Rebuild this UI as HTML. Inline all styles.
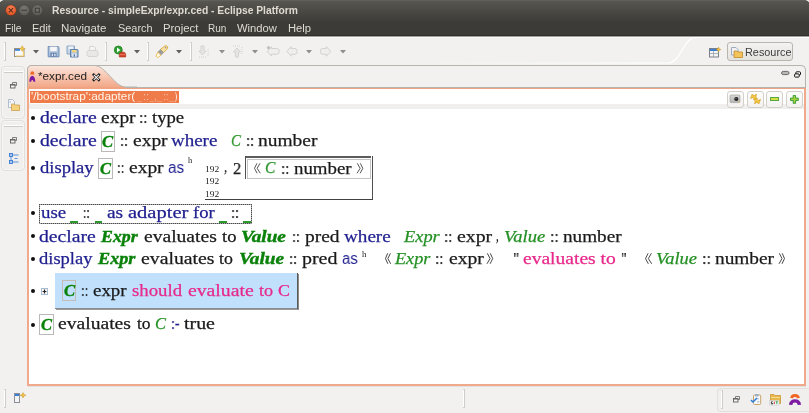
<!DOCTYPE html>
<html><head><meta charset="utf-8"><style>
html,body{margin:0;padding:0;}
body{width:809px;height:413px;overflow:hidden;position:relative;background:#f2f1f0;}
.t{position:absolute;white-space:pre;line-height:normal;transform-origin:0 0;will-change:transform;}
svg{position:absolute;overflow:visible;}
</style></head><body>
<div style="position:absolute;left:0px;top:0px;width:809px;height:22px;background:linear-gradient(#5b5a53,#57554f 8%,#4a4944 50%,#3d3c38);"></div>
<div style="position:absolute;left:0px;top:0px;width:809px;height:1px;background:#60605a;"></div>
<div style="position:absolute;left:0px;top:0px;width:2px;height:1px;background:#e8e8e6;"></div>
<div style="position:absolute;left:0px;top:1px;width:1px;height:1px;background:#d0d0cc;"></div>
<div style="position:absolute;left:2px;top:0px;width:1px;height:1px;background:#a0a09a;"></div>
<div style="position:absolute;left:807px;top:0px;width:2px;height:1px;background:#e8e8e6;"></div>
<div style="position:absolute;left:808px;top:1px;width:1px;height:1px;background:#d0d0cc;"></div>
<div style="position:absolute;left:806px;top:0px;width:1px;height:1px;background:#a0a09a;"></div>
<div style="position:absolute;left:0px;top:22px;width:809px;height:13px;background:#3c3b37;"></div>
<div style="position:absolute;left:0px;top:35px;width:809px;height:1px;background:#302f2b;"></div>
<div style="position:absolute;left:0px;top:36px;width:809px;height:1px;background:#a3a19d;"></div>
<div style="position:absolute;left:0px;top:37px;width:809px;height:1px;background:#f8f7f6;"></div>
<svg style="left:0;top:0" width="50" height="20">
<defs><radialGradient id="cg" cx="50%" cy="35%" r="60%"><stop offset="0" stop-color="#f8875c"/><stop offset="1" stop-color="#e0501f"/></radialGradient>
<radialGradient id="gg" cx="50%" cy="35%" r="60%"><stop offset="0" stop-color="#7a7872"/><stop offset="1" stop-color="#5d5b56"/></radialGradient></defs>
<circle cx="10.9" cy="10.2" r="5.4" fill="url(#cg)" stroke="#3a2a20" stroke-width="0.4"/>
<path d="M8.8 8.1 L13 12.3 M13 8.1 L8.8 12.3" stroke="#5a2a14" stroke-width="1.1"/>
<circle cx="24.2" cy="10.2" r="5.4" fill="url(#gg)" stroke="#3a3935" stroke-width="0.4"/>
<path d="M21.6 10.2 H26.8" stroke="#3c3b37" stroke-width="1.1"/>
<circle cx="37.3" cy="10.2" r="5.4" fill="url(#gg)" stroke="#3a3935" stroke-width="0.4"/>
<rect x="35.3" y="8.2" width="4" height="4" fill="none" stroke="#3c3b37" stroke-width="1"/>
</svg>
<div style="position:absolute;left:4px;top:42px;width:2px;height:1px;background:#d8d6d2;"></div>
<div style="position:absolute;left:4px;top:60px;width:2px;height:1px;background:#d0cecA;"></div>
<div style="position:absolute;left:4px;top:43px;width:1px;height:17px;background:#ffffff;"></div>
<div style="position:absolute;left:5px;top:42px;width:1px;height:19px;background:#cfcdc9;"></div>
<div style="position:absolute;left:105px;top:42px;width:2px;height:1px;background:#d8d6d2;"></div>
<div style="position:absolute;left:105px;top:60px;width:2px;height:1px;background:#d0cecA;"></div>
<div style="position:absolute;left:105px;top:43px;width:1px;height:17px;background:#ffffff;"></div>
<div style="position:absolute;left:106px;top:42px;width:1px;height:19px;background:#cfcdc9;"></div>
<div style="position:absolute;left:147px;top:42px;width:2px;height:1px;background:#d8d6d2;"></div>
<div style="position:absolute;left:147px;top:60px;width:2px;height:1px;background:#d0cecA;"></div>
<div style="position:absolute;left:147px;top:43px;width:1px;height:17px;background:#ffffff;"></div>
<div style="position:absolute;left:148px;top:42px;width:1px;height:19px;background:#cfcdc9;"></div>
<div style="position:absolute;left:190px;top:42px;width:2px;height:1px;background:#d8d6d2;"></div>
<div style="position:absolute;left:190px;top:60px;width:2px;height:1px;background:#d0cecA;"></div>
<div style="position:absolute;left:190px;top:43px;width:1px;height:17px;background:#ffffff;"></div>
<div style="position:absolute;left:191px;top:42px;width:1px;height:19px;background:#cfcdc9;"></div>
<svg style="left:13px;top:45px" width="13" height="12">
<rect x="1.5" y="3.5" width="9.5" height="8" fill="#f6f8fb" stroke="#9a8f80" stroke-width="1"/>
<rect x="2" y="4" width="5" height="1.8" fill="#3f86d6"/>
<path d="M3 11 H10.5 V6" stroke="#f2d070" stroke-width="1.2" fill="none"/>
<path d="M9.3 0.8 L10.3 2.8 L12.2 3.6 L10.3 4.4 L9.3 6.4 L8.3 4.4 L6.4 3.6 L8.3 2.8 Z" fill="#f3c64a" stroke="#c89a30" stroke-width="0.5"/>
</svg>
<svg style="left:32.5px;top:50px" width="7" height="5"><path d="M0 0 H6 L3 3.6 Z" fill="#606060"/></svg>
<svg style="left:47px;top:45px" width="13" height="13">
<path d="M1.2 1.5 H11.2 L12 2.3 V11.8 H1.2 Z" fill="#a9c0dc" stroke="#6f8fb6" stroke-width="1"/>
<rect x="3" y="1.8" width="7" height="4.4" fill="#f7f7fa" stroke="#c9cfd8" stroke-width="0.5"/>
<rect x="3.5" y="7.8" width="6" height="4" fill="#5678a6"/>
<rect x="4.7" y="8.6" width="1.4" height="2.6" fill="#dfe6f0"/>
<rect x="7.2" y="8.6" width="1.4" height="2.6" fill="#dfe6f0"/>
</svg>
<svg style="left:66px;top:45px" width="13" height="13">
<path d="M1 1 H8.5 V9 H1 Z" fill="#c5d4e6" stroke="#8ea6c2" stroke-width="1"/>
<rect x="2.5" y="1.5" width="4.5" height="2.6" fill="#eef1f6"/>
<path d="M4.5 4.5 H11.5 L12 5 V12 H4.5 Z" fill="#a9c0dc" stroke="#5f80aa" stroke-width="1"/>
<rect x="6" y="5" width="4.5" height="2.4" fill="#f2d47a"/>
<rect x="6" y="8.5" width="4.6" height="3.2" fill="#dfe6f4"/>
<rect x="7.6" y="9.4" width="1.4" height="2.3" fill="#5678a6"/>
</svg>
<svg style="left:86px;top:45px" width="13" height="13">
<path d="M3.5 1.5 H8 L9.5 3 V6 H3.5 Z" fill="#f4f4f4" stroke="#d6d5d2" stroke-width="1"/>
<rect x="1" y="5.5" width="11" height="6" rx="2" fill="#e9e8e6" stroke="#d6d5d2" stroke-width="1"/>
</svg>
<svg style="left:113px;top:45px" width="14" height="13">
<circle cx="5.3" cy="5" r="4" fill="#2f9f2f" stroke="#1e7a1e" stroke-width="0.7"/>
<path d="M4 2.6 L7.4 5 L4 7.4 Z" fill="#f4fff4"/>
<path d="M6.3 12 V9.5 Q6.3 7 9.5 7 Q12.7 7 12.7 9.5 V12 Z" fill="#d2452c" stroke="#a83018" stroke-width="0.6"/>
<path d="M7 9.6 H12" stroke="#f08a70" stroke-width="0.7"/>
</svg>
<svg style="left:134px;top:50px" width="7" height="5"><path d="M0 0 H6 L3 3.6 Z" fill="#606060"/></svg>
<svg style="left:155px;top:45px" width="14" height="13">
<path d="M9.8 0.9 Q11.8 0.3 12.6 1.6 Q13 3 11.8 4.3 L8.6 7.6 L5.4 4.4 Z" fill="#f6e2a0" stroke="#d6a030" stroke-width="0.8"/>
<path d="M5.4 4.4 L8.6 7.6 L5.9 10.3 L2.7 7.1 Z" fill="#9c9c9c" stroke="#8a8a8a" stroke-width="0.4"/>
<path d="M2.7 7.1 L5.9 10.3 L3.4 12.3 Q1.5 12.6 1 11.2 Z" fill="#fffbe8" stroke="#e8b440" stroke-width="0.8"/>
<circle cx="10.7" cy="2.6" r="0.8" fill="#9090a8"/>
</svg>
<svg style="left:176px;top:50px" width="7" height="5"><path d="M0 0 H6 L3 3.6 Z" fill="#606060"/></svg>
<svg style="left:198px;top:45px" width="12" height="13">
<path d="M3 1 H6 V6 H8 L4.5 10 L1 6 H3 Z" fill="#e8e6e2" stroke="#d4d2ce" stroke-width="1"/>
<path d="M1 12 H9 M10 4 V11" stroke="#d4d2ce" stroke-width="1" stroke-dasharray="1 1"/>
</svg>
<svg style="left:219px;top:50px" width="7" height="5"><path d="M0 0 H6 L3 3.6 Z" fill="#8e8e8e"/></svg>
<svg style="left:232px;top:45px" width="12" height="13">
<path d="M3.5 12 H6.5 V7 H8.5 L5 3 L1.5 7 H3.5 Z" fill="#e8e6e2" stroke="#d4d2ce" stroke-width="1"/>
<path d="M1 1 H9 M10 2 V9" stroke="#d4d2ce" stroke-width="1" stroke-dasharray="1 1"/>
</svg>
<svg style="left:252px;top:50px" width="7" height="5"><path d="M0 0 H6 L3 3.6 Z" fill="#8e8e8e"/></svg>
<svg style="left:266px;top:46px" width="14" height="11">
<path d="M5.5 2.5 H10.5 A2.8 2.8 0 0 1 10.5 8.2 H5.5 V10 L1.2 5.4 L5.5 0.8 Z" fill="#efeeec" stroke="#d2d0cc" stroke-width="1"/>
<path d="M2.5 0 V3.4 M0.8 1.7 H4.2 M1.3 0.5 L3.7 2.9 M3.7 0.5 L1.3 2.9" stroke="#b8b6b2" stroke-width="0.8"/>
</svg>
<svg style="left:286px;top:46px" width="12" height="11">
<path d="M5.2 2.5 H9 A2.2 2.9 0 0 1 9 8.3 H5.2 V10.2 L0.8 5.4 L5.2 0.6 Z" fill="#efeeec" stroke="#d4d2ce" stroke-width="1"/>
</svg>
<svg style="left:305.5px;top:50px" width="7" height="5"><path d="M0 0 H6 L3 3.6 Z" fill="#8e8e8e"/></svg>
<svg style="left:319.5px;top:46px" width="12" height="11">
<path d="M6.3 2.5 H2.5 A2.2 2.9 0 0 0 2.5 8.3 H6.3 V10.2 L10.7 5.4 L6.3 0.6 Z" fill="#efeeec" stroke="#d4d2ce" stroke-width="1"/>
</svg>
<svg style="left:339.5px;top:50px" width="7" height="5"><path d="M0 0 H6 L3 3.6 Z" fill="#8e8e8e"/></svg>
<svg style="left:0;top:36px" width="809" height="30">
<defs><linearGradient id="wf" gradientUnits="userSpaceOnUse" x1="420" y1="0" x2="640" y2="0"><stop offset="0" stop-color="#fff" stop-opacity="0"/><stop offset="1" stop-color="#fff" stop-opacity="1"/></linearGradient></defs>
<path d="M420 27 H668 C681 27 683 1.5 696 1.5 H809" fill="none" stroke="url(#wf)" stroke-width="1.2"/>
</svg>
<svg style="left:709px;top:47px" width="13" height="11">
<rect x="0.5" y="1.5" width="9" height="8.5" fill="#f4f4f4" stroke="#7a7f88" stroke-width="1"/>
<rect x="1" y="2" width="8" height="2" fill="#3b7fd0"/>
<path d="M1 6.5 H9.5 M4.5 4 V10" stroke="#9aa0a8" stroke-width="0.8"/>
<path d="M9.5 0 L10.3 1.8 L12 2.5 L10.3 3.2 L9.5 5 L8.7 3.2 L7 2.5 L8.7 1.8 Z" fill="#f0c040" stroke="#c08a20" stroke-width="0.4"/>
</svg>
<div style="position:absolute;left:727px;top:42px;width:66px;height:19px;box-sizing:border-box;border:1px solid #b9b6b0;border-radius:3px;background:linear-gradient(#f4f3f1,#e4e2de);"></div>
<svg style="left:731px;top:47px" width="12" height="11">
<path d="M0.5 0.5 H5 L7 2.5 V8 H0.5 Z" fill="#eef2f8" stroke="#8a9ab0" stroke-width="0.8"/>
<path d="M3 4 H6 L7 5 H11.5 V10.5 H3 Z" fill="#f2c45a" stroke="#c08a28" stroke-width="0.8"/>
</svg>
<div style="position:absolute;left:1px;top:66px;width:24px;height:53px;box-sizing:border-box;border:1px solid #e2e0dc;border-radius:4px;background:#f0efed;box-shadow:inset 0 0 0 1px #f7f6f5;"></div>
<div style="position:absolute;left:1px;top:120px;width:24px;height:51px;box-sizing:border-box;border:1px solid #e2e0dc;border-radius:4px;background:#f0efed;box-shadow:inset 0 0 0 1px #f7f6f5;"></div>
<div style="position:absolute;left:4px;top:71px;width:19px;height:1px;background:#ffffff;"></div>
<div style="position:absolute;left:4px;top:72px;width:19px;height:1px;background:#cfccc7;"></div>
<div style="position:absolute;left:4px;top:125px;width:19px;height:1px;background:#ffffff;"></div>
<div style="position:absolute;left:4px;top:126px;width:19px;height:1px;background:#cfccc7;"></div>
<svg style="left:10px;top:82px" width="7" height="7">
<path d="M2.5 2 V0.5 H6.5 V3.5 H5.2" fill="none" stroke="#707070" stroke-width="0.9"/>
<rect x="0.5" y="2.5" width="4.5" height="3.5" fill="#f4f4f4" stroke="#606060" stroke-width="0.9"/>
<path d="M0.5 3 H5" stroke="#606060" stroke-width="1"/>
</svg>
<svg style="left:10px;top:137px" width="7" height="7">
<path d="M2.5 2 V0.5 H6.5 V3.5 H5.2" fill="none" stroke="#707070" stroke-width="0.9"/>
<rect x="0.5" y="2.5" width="4.5" height="3.5" fill="#f4f4f4" stroke="#606060" stroke-width="0.9"/>
<path d="M0.5 3 H5" stroke="#606060" stroke-width="1"/>
</svg>
<svg style="left:8px;top:99px" width="12" height="12">
<path d="M0.5 0.5 H4.5 L6.5 2.5 V8.5 H0.5 Z" fill="#f4f6fa" stroke="#a0aec0" stroke-width="0.8"/>
<path d="M1.5 3 H3" stroke="#7aa0d0" stroke-width="0.8"/>
<path d="M3.5 5 H6 L7 6 H11.5 V11.5 H3.5 Z" fill="#f6d27a" stroke="#caa050" stroke-width="0.8"/>
</svg>
<svg style="left:9px;top:153px" width="10" height="12">
<rect x="0.5" y="0.5" width="3" height="3" fill="#a8c8f0" stroke="#3a7ad0" stroke-width="0.9"/>
<rect x="0.5" y="7.5" width="3" height="3" fill="#a8c8f0" stroke="#3a7ad0" stroke-width="0.9"/>
<path d="M4 2 H9.5 M4 9 H9.5 M5.5 5.5 H8.5 M2 3.5 V7.5" stroke="#4a88d8" stroke-width="0.9"/>
</svg>
<div style="position:absolute;left:27px;top:65px;width:779px;height:320px;box-sizing:border-box;border:1px solid #b7b3ad;border-bottom:none;border-radius:5px 5px 0 0;background:#f2f1f0;"></div>
<div style="position:absolute;left:27px;top:87px;width:779px;height:1px;background:#b7b3ad;"></div>
<svg style="left:27px;top:65px" width="110" height="24">
<defs><linearGradient id="tg" x1="0" y1="0" x2="0" y2="1"><stop offset="0" stop-color="#fce6dc"/><stop offset="1" stop-color="#f1a280"/></linearGradient></defs>
<path d="M0.5 24 V5 Q0.5 0.5 5 0.5 H68 C78 0.5 88 22 98 22 V24 Z" fill="url(#tg)"/>
<path d="M0.5 24 V5 Q0.5 0.5 5 0.5 H68 C78 0.5 88 22 98 22 H110" fill="none" stroke="#b7b3ad" stroke-width="1"/>
</svg>
<div style="position:absolute;left:27px;top:88px;width:779px;height:298px;box-sizing:border-box;border:2px solid #f0a98b;border-top:1px solid #f0a384;background:#fff;"></div>
<div style="position:absolute;left:28px;top:386px;width:778px;height:1px;background:#e2e0dd;"></div>
<div style="position:absolute;left:27px;top:87px;width:98px;height:2px;background:#f1a280;"></div>
<svg style="left:29px;top:70px" width="8" height="13">
<path d="M1.3 4.6 C1.3 0.2 5.3 0.2 5.3 4.6 Z" fill="#f26522"/>
<path d="M0.3 11.8 C0.3 3.6 6.3 3.6 6.3 11.8 L4.4 11.8 C4.2 9.3 2.4 9.3 2.2 11.8 Z" fill="#7d1ba3"/>
</svg>
<svg style="left:92px;top:72.5px" width="9" height="9">
<path d="M1.8 1.8 L6.8 6.8 M6.8 1.8 L1.8 6.8" stroke="#1a1a1a" stroke-width="2.6" stroke-linecap="square"/>
<path d="M1.8 1.8 L6.8 6.8 M6.8 1.8 L1.8 6.8" stroke="#fafafa" stroke-width="1.1"/>
</svg>
<svg style="left:781px;top:70px" width="9" height="6"><rect x="0.6" y="1.4" width="7.4" height="3.2" rx="1.6" fill="#b9b9b9" stroke="#6a6a6a" stroke-width="1"/></svg>
<svg style="left:793.5px;top:71px" width="8" height="7"><rect x="1.9" y="0.8" width="4.6" height="3.2" rx="0.8" fill="#fff" stroke="#111" stroke-width="1"/><rect x="0.6" y="2.9" width="4.6" height="3.2" rx="0.8" fill="#f4f4f4" stroke="#111" stroke-width="1"/></svg>
<div style="position:absolute;left:29px;top:104px;width:775px;height:5px;background:#f0efee;"></div>
<div style="position:absolute;left:30px;top:91px;width:149px;height:12px;background:#ef7b4b;"></div>
<div style="position:absolute;left:726.5px;top:90.5px;width:17px;height:17px;box-sizing:border-box;border:1px solid #d3d0cb;border-radius:3px;background:linear-gradient(#fdfdfc,#f3f2f0);"></div>
<div style="position:absolute;left:746.5px;top:90.5px;width:17px;height:17px;box-sizing:border-box;border:1px solid #d3d0cb;border-radius:3px;background:linear-gradient(#fdfdfc,#f3f2f0);"></div>
<div style="position:absolute;left:766px;top:90.5px;width:17px;height:17px;box-sizing:border-box;border:1px solid #d3d0cb;border-radius:3px;background:linear-gradient(#fdfdfc,#f3f2f0);"></div>
<div style="position:absolute;left:786px;top:90.5px;width:17px;height:17px;box-sizing:border-box;border:1px solid #d3d0cb;border-radius:3px;background:linear-gradient(#fdfdfc,#f3f2f0);"></div>
<svg style="left:729px;top:94px" width="13" height="10">
<defs><linearGradient id="cam" x1="0" y1="0" x2="0" y2="1"><stop offset="0" stop-color="#d8d8d8"/><stop offset="1" stop-color="#b4b4b4"/></linearGradient></defs>
<rect x="1" y="1" width="10" height="7.6" rx="1" fill="url(#cam)" stroke="#9a9a9a" stroke-width="0.6"/>
<circle cx="7.3" cy="5" r="2.1" fill="#222"/><circle cx="7" cy="4.6" r="0.7" fill="#888"/>
<rect x="9.2" y="7.4" width="1.6" height="1" fill="#e0c060"/>
</svg>
<svg style="left:749px;top:93px" width="13" height="13">
<path d="M1.5 5.5 L3 1.2 L5 2.6 L7.5 1.2 L6.8 4.2 L8.6 5.6 L5.4 6.2 L4 4.6 Z" fill="#f2c842" stroke="#d49a20" stroke-width="0.6"/>
<path d="M11.5 6.5 L10 10.8 L8 9.4 L5.5 10.8 L6.2 7.8 L4.4 6.4 L7.6 5.8 L9 7.4 Z" fill="#f2c842" stroke="#d49a20" stroke-width="0.6"/>
</svg>
<div style="position:absolute;left:770px;top:97px;width:9px;height:4px;box-sizing:border-box;background:#d6e040;border:1px solid #58a848;"></div>
<svg style="left:790px;top:94.5px" width="10" height="9"><path d="M3.2 0.5 H5.6 V3.1 H8.3 V5.5 H5.6 V8.3 H3.2 V5.5 H0.5 V3.1 H3.2 Z" fill="#a6d040" stroke="#2f9a2f" stroke-width="0.9"/></svg>
<div style="position:absolute;left:4px;top:389px;width:2px;height:1px;background:#d8d6d2;"></div>
<div style="position:absolute;left:4px;top:407px;width:2px;height:1px;background:#d0cecA;"></div>
<div style="position:absolute;left:4px;top:390px;width:1px;height:17px;background:#ffffff;"></div>
<div style="position:absolute;left:5px;top:389px;width:1px;height:19px;background:#cfcdc9;"></div>
<div style="position:absolute;left:463px;top:389px;width:2px;height:1px;background:#d8d6d2;"></div>
<div style="position:absolute;left:463px;top:407px;width:2px;height:1px;background:#d0cecA;"></div>
<div style="position:absolute;left:463px;top:390px;width:1px;height:17px;background:#ffffff;"></div>
<div style="position:absolute;left:464px;top:389px;width:1px;height:19px;background:#cfcdc9;"></div>
<div style="position:absolute;left:717px;top:388px;width:92px;height:24px;box-sizing:border-box;border:1px solid #e2e0dc;border-right:none;border-radius:4px 0 0 4px;background:#f0efed;"></div>
<div style="position:absolute;left:721px;top:390px;width:2px;height:1px;background:#d8d6d2;"></div>
<div style="position:absolute;left:721px;top:408px;width:2px;height:1px;background:#d0cecA;"></div>
<div style="position:absolute;left:721px;top:391px;width:1px;height:17px;background:#ffffff;"></div>
<div style="position:absolute;left:722px;top:390px;width:1px;height:19px;background:#cfcdc9;"></div>
<svg style="left:14px;top:392px" width="12" height="12">
<rect x="0.5" y="1.5" width="5" height="9" fill="#f4f4f4" stroke="#8a8f99" stroke-width="1"/>
<rect x="1" y="2" width="4" height="2" fill="#3b7fd0"/>
<path d="M9 0.5 L10 2.5 L12 3.2 L10 4 L9 6 L8 4 L6 3.2 L8 2.5 Z" fill="#f0c040" stroke="#c08a20" stroke-width="0.4"/>
</svg>
<svg style="left:732.5px;top:396px" width="7" height="7">
<path d="M2.5 2 V0.5 H6.5 V3.5 H5.2" fill="none" stroke="#707070" stroke-width="0.9"/>
<rect x="0.5" y="2.5" width="4.5" height="3.5" fill="#f4f4f4" stroke="#606060" stroke-width="0.9"/>
<path d="M0.5 3 H5" stroke="#606060" stroke-width="1"/>
</svg>
<svg style="left:750px;top:393px" width="12" height="13">
<rect x="3.5" y="2" width="7.2" height="9.5" rx="1" fill="#f6f8fb" stroke="#c9a266" stroke-width="1"/>
<rect x="5" y="1" width="3.6" height="2.6" rx="0.8" fill="#9db0c4"/>
<path d="M8 5 V6.5 M7.2 8.8 H9.2" stroke="#8a98a8" stroke-width="0.8"/>
<path d="M1 7.2 L3 9 L7 5" fill="none" stroke="#2f7fd6" stroke-width="1.6"/>
</svg>
<svg style="left:769px;top:393px" width="13" height="13">
<path d="M1.5 1.5 H5 L6 2.5 H11.5 V10.5 H1.5 Z" fill="#e9b84c" stroke="#c99530" stroke-width="0.8"/>
<path d="M2 4.5 H11" stroke="#f6da90" stroke-width="1"/>
<rect x="0.5" y="7.5" width="9.5" height="4.6" fill="#f4f6f8" stroke="#c8ccd2" stroke-width="0.6"/>
<path d="M3.6 8.7 H2.4 V11 H3.6 V10" fill="none" stroke="#333" stroke-width="0.9"/>
<path d="M5.3 8.6 V11.1" stroke="#d83a3a" stroke-width="1"/>
<path d="M6.7 8.7 H8.9 M7.8 8.7 V11.1" stroke="#2aa04a" stroke-width="0.9"/>
</svg>
<svg style="left:788px;top:393px" width="15" height="13">
<path d="M3.6 5.2 C4 1.6 10 1.6 10.4 5.2" fill="none" stroke="#f26522" stroke-width="2.8"/>
<path d="M2.6 11.8 C3 6.6 11 6.6 11.4 11.8" fill="none" stroke="#7d1ba3" stroke-width="3.4"/>
</svg>
<div style="position:absolute;left:30.6px;top:115.9px;width:4.2px;height:4.2px;border-radius:50%;background:#111;"></div>
<div style="position:absolute;left:30.6px;top:138.9px;width:4.2px;height:4.2px;border-radius:50%;background:#111;"></div>
<div style="position:absolute;left:101px;top:131px;width:14px;height:21px;box-sizing:border-box;border:1px solid #b9b9b9;background:transparent;"></div>
<div style="position:absolute;left:30.6px;top:165.9px;width:4.2px;height:4.2px;border-radius:50%;background:#111;"></div>
<div style="position:absolute;left:98px;top:158px;width:15px;height:21px;box-sizing:border-box;border:1px solid #b9b9b9;background:transparent;"></div>
<div style="position:absolute;left:245px;top:156px;width:126px;height:1.5px;background:#5c5c5c;"></div>
<div style="position:absolute;left:245px;top:156px;width:1px;height:23px;background:#505050;"></div>
<div style="position:absolute;left:372px;top:156px;width:1px;height:44px;background:#505050;"></div>
<div style="position:absolute;left:205px;top:199px;width:168px;height:1px;background:#404040;"></div>
<div style="position:absolute;left:247px;top:158.5px;width:124px;height:20px;box-sizing:border-box;border:1px solid #c4c4c4;"></div>
<svg style="left:254px;top:163.1px" width="7.30" height="11.60"><path d="M2.95 0.3 L0.5 5.30 L3.15 10.30 M6.00 0.3 L3.15 5.30 L6.30 10.30" fill="none" stroke="#444" stroke-width="0.9"/></svg>
<svg style="left:357px;top:163.1px" width="7.30" height="11.60"><path d="M3.35 0.3 L5.80 5.30 L3.15 10.30 M0.3 0.3 L3.15 5.30 L0 10.30" fill="none" stroke="#444" stroke-width="0.9"/></svg>
<div style="position:absolute;left:30.6px;top:210.70000000000002px;width:4.2px;height:4.2px;border-radius:50%;background:#111;"></div>
<div style="position:absolute;left:39px;top:204px;width:213px;height:1px;background:repeating-linear-gradient(90deg,#4a4a4a 0 1px,#a4a4a4 1px 2px);"></div>
<div style="position:absolute;left:39px;top:223px;width:213px;height:1px;background:repeating-linear-gradient(90deg,#4a4a4a 0 1px,#a4a4a4 1px 2px);"></div>
<div style="position:absolute;left:39px;top:204px;width:1px;height:20px;background:repeating-linear-gradient(180deg,#4a4a4a 0 1px,#a4a4a4 1px 2px);"></div>
<div style="position:absolute;left:251px;top:204px;width:1px;height:20px;background:repeating-linear-gradient(180deg,#4a4a4a 0 1px,#a4a4a4 1px 2px);"></div>
<div style="position:absolute;left:70.3px;top:221px;width:7.400000000000006px;height:1.6px;background:#2a9a2a;"></div>
<div style="position:absolute;left:94.8px;top:221px;width:7.400000000000006px;height:1.6px;background:#2a9a2a;"></div>
<div style="position:absolute;left:218.7px;top:221px;width:7.900000000000006px;height:1.6px;background:#2a9a2a;"></div>
<div style="position:absolute;left:243.4px;top:221px;width:7.900000000000006px;height:1.6px;background:#2a9a2a;"></div>
<div style="position:absolute;left:30.6px;top:234.0px;width:4.2px;height:4.2px;border-radius:50%;background:#111;"></div>
<div style="position:absolute;left:30.6px;top:256.9px;width:4.2px;height:4.2px;border-radius:50%;background:#111;"></div>
<svg style="left:384.6px;top:253.4px" width="6.70" height="12.10"><path d="M2.65 0.3 L0.5 5.55 L2.85 10.80 M5.40 0.3 L2.85 5.55 L5.70 10.80" fill="none" stroke="#333" stroke-width="0.9"/></svg>
<svg style="left:487px;top:253.4px" width="7.20" height="12.10"><path d="M3.30 0.3 L5.70 5.55 L3.10 10.80 M0.3 0.3 L3.10 5.55 L0 10.80" fill="none" stroke="#333" stroke-width="0.9"/></svg>
<svg style="left:645px;top:253.4px" width="7.70" height="12.10"><path d="M3.15 0.3 L0.5 5.55 L3.35 10.80 M6.40 0.3 L3.35 5.55 L6.70 10.80" fill="none" stroke="#333" stroke-width="0.9"/></svg>
<svg style="left:779.2px;top:253.4px" width="7.00" height="12.10"><path d="M3.20 0.3 L5.50 5.55 L3.00 10.80 M0.3 0.3 L3.00 5.55 L0 10.80" fill="none" stroke="#333" stroke-width="0.9"/></svg>
<div style="position:absolute;left:30.6px;top:289.0px;width:4.2px;height:4.2px;border-radius:50%;background:#111;"></div>
<svg style="left:41px;top:288px" width="8" height="8"><rect x="0.5" y="0.5" width="6" height="6" fill="#fbfaf6" stroke="#a6bcd4" stroke-width="1"/><path d="M1.6 3.5 H5.4 M3.5 1.6 V5.4" stroke="#222" stroke-width="1.2"/></svg>
<div style="position:absolute;left:55px;top:273px;width:243px;height:36px;background:#c0e0fc;"></div>
<div style="position:absolute;left:55px;top:308px;width:243px;height:1px;background:#8a8d90;"></div>
<div style="position:absolute;left:56px;top:309px;width:243px;height:1px;background:#9a9a9a;"></div>
<div style="position:absolute;left:297px;top:273px;width:1px;height:36px;background:#5a5a5a;"></div>
<div style="position:absolute;left:298px;top:274px;width:1px;height:36px;background:#8a8a8a;"></div>
<div style="position:absolute;left:62px;top:280px;width:14px;height:21px;box-sizing:border-box;border:1px solid #c2bcb4;background:transparent;"></div>
<div style="position:absolute;left:30.6px;top:322.7px;width:4.2px;height:4.2px;border-radius:50%;background:#111;"></div>
<div style="position:absolute;left:39px;top:314px;width:15px;height:21px;box-sizing:border-box;border:1px solid #b9b9b9;background:transparent;"></div>
<span class="t" style="left:52.00px;top:5.00px;font-family:'Liberation Sans', sans-serif;font-weight:bold;font-style:normal;font-size:10px;color:#dfdbd2;transform:scaleX(1.0293);">Resource - simpleExpr/expr.ced - Eclipse Platform</span>
<span class="t" style="left:4.90px;top:23.00px;font-family:'Liberation Sans', sans-serif;font-weight:normal;font-style:normal;font-size:10px;color:#dfdbd2;transform:scaleX(1.0248);">File</span>
<span class="t" style="left:32.00px;top:23.00px;font-family:'Liberation Sans', sans-serif;font-weight:normal;font-style:normal;font-size:10px;color:#dfdbd2;transform:scaleX(1.0983);">Edit</span>
<span class="t" style="left:61.30px;top:23.00px;font-family:'Liberation Sans', sans-serif;font-weight:normal;font-style:normal;font-size:10px;color:#dfdbd2;transform:scaleX(1.1519);">Navigate</span>
<span class="t" style="left:117.70px;top:23.00px;font-family:'Liberation Sans', sans-serif;font-weight:normal;font-style:normal;font-size:10px;color:#dfdbd2;transform:scaleX(1.0915);">Search</span>
<span class="t" style="left:162.60px;top:23.00px;font-family:'Liberation Sans', sans-serif;font-weight:normal;font-style:normal;font-size:10px;color:#dfdbd2;transform:scaleX(1.1350);">Project</span>
<span class="t" style="left:208.40px;top:23.00px;font-family:'Liberation Sans', sans-serif;font-weight:normal;font-style:normal;font-size:10px;color:#dfdbd2;">Run</span>
<span class="t" style="left:237.20px;top:23.00px;font-family:'Liberation Sans', sans-serif;font-weight:normal;font-style:normal;font-size:10px;color:#dfdbd2;transform:scaleX(1.1208);">Window</span>
<span class="t" style="left:287.60px;top:23.00px;font-family:'Liberation Sans', sans-serif;font-weight:normal;font-style:normal;font-size:10px;color:#dfdbd2;transform:scaleX(1.1214);">Help</span>
<span class="t" style="left:744.70px;top:47.00px;font-family:'Liberation Sans', sans-serif;font-weight:normal;font-style:normal;font-size:10px;color:#3c3c3c;transform:scaleX(1.0864);">Resource</span>
<span class="t" style="left:37.80px;top:70.00px;font-family:'Liberation Sans', sans-serif;font-weight:normal;font-style:normal;font-size:10.5px;color:#1e1e1e;transform:scaleX(1.1187);">*expr.ced</span>
<span class="t" style="left:31.00px;top:90.00px;font-family:'Liberation Sans', sans-serif;font-weight:normal;font-style:normal;font-size:11px;color:#fff4e8;transform:scaleX(1.0731);">'/bootstrap':adapter(</span>
<span class="t" style="left:137.44px;top:90.00px;font-family:'Liberation Sans', sans-serif;font-weight:normal;font-style:normal;font-size:11px;color:#f4a47c;transform:scaleX(0.7231);">_</span>
<span class="t" style="left:142.50px;top:90.00px;font-family:'Liberation Sans', sans-serif;font-weight:normal;font-style:normal;font-size:11px;color:#f9c4a4;transform:scaleX(0.9508);">::</span>
<span class="t" style="left:149.53px;top:90.00px;font-family:'Liberation Sans', sans-serif;font-weight:normal;font-style:normal;font-size:11px;color:#f4a47c;transform:scaleX(0.6462);">_</span>
<span class="t" style="left:155.00px;top:90.00px;font-family:'Liberation Sans', sans-serif;font-weight:normal;font-style:normal;font-size:11px;color:#fde8d8;transform:scaleX(0.4839);">,</span>
<span class="t" style="left:157.36px;top:90.00px;font-family:'Liberation Sans', sans-serif;font-weight:normal;font-style:normal;font-size:11px;color:#f4a47c;transform:scaleX(0.8154);">_</span>
<span class="t" style="left:162.80px;top:90.00px;font-family:'Liberation Sans', sans-serif;font-weight:normal;font-style:normal;font-size:11px;color:#f9c4a4;transform:scaleX(0.9016);">::</span>
<span class="t" style="left:169.46px;top:90.00px;font-family:'Liberation Sans', sans-serif;font-weight:normal;font-style:normal;font-size:11px;color:#f4a47c;transform:scaleX(0.8154);">_</span>
<span class="t" style="left:175.10px;top:90.00px;font-family:'Liberation Sans', sans-serif;font-weight:normal;font-style:normal;font-size:11px;color:#fff4e8;transform:scaleX(0.5676);">)</span>
<span class="t" style="left:39.50px;top:108.00px;font-family:'Liberation Serif', serif;font-weight:normal;font-style:normal;font-size:17px;color:#1f1f8f;transform:scaleX(1.1589);-webkit-text-stroke:0.25px #1f1f8f;">declare</span>
<span class="t" style="left:100.90px;top:108.00px;font-family:'Liberation Serif', serif;font-weight:normal;font-style:normal;font-size:17px;color:#1a1a1a;transform:scaleX(1.1457);-webkit-text-stroke:0.25px #1a1a1a;">expr</span>
<span class="t" style="left:139.00px;top:108.00px;font-family:'Liberation Serif', serif;font-weight:normal;font-style:normal;font-size:17px;color:#1a1a1a;transform:scaleX(0.8936);-webkit-text-stroke:0.25px #1a1a1a;">::</span>
<span class="t" style="left:152.30px;top:108.00px;font-family:'Liberation Serif', serif;font-weight:normal;font-style:normal;font-size:17px;color:#1a1a1a;transform:scaleX(1.0990);-webkit-text-stroke:0.25px #1a1a1a;">type</span>
<span class="t" style="left:39.50px;top:131.00px;font-family:'Liberation Serif', serif;font-weight:normal;font-style:normal;font-size:17px;color:#1f1f8f;transform:scaleX(1.1589);-webkit-text-stroke:0.25px #1f1f8f;">declare</span>
<span class="t" style="left:102.30px;top:132.00px;font-family:'Liberation Serif', serif;font-weight:bold;font-style:italic;font-size:16.5px;color:#0a820a;transform:scaleX(1.0089);-webkit-text-stroke:0.4px #0a820a;">C</span>
<span class="t" style="left:119.70px;top:131.00px;font-family:'Liberation Serif', serif;font-weight:normal;font-style:normal;font-size:17px;color:#1a1a1a;transform:scaleX(0.8404);-webkit-text-stroke:0.25px #1a1a1a;">::</span>
<span class="t" style="left:132.50px;top:131.00px;font-family:'Liberation Serif', serif;font-weight:normal;font-style:normal;font-size:17px;color:#1a1a1a;transform:scaleX(1.1457);-webkit-text-stroke:0.25px #1a1a1a;">expr</span>
<span class="t" style="left:170.60px;top:131.00px;font-family:'Liberation Serif', serif;font-weight:normal;font-style:normal;font-size:17px;color:#1f1f8f;transform:scaleX(1.1157);-webkit-text-stroke:0.25px #1f1f8f;">where</span>
<span class="t" style="left:230.60px;top:130.60px;font-family:'Liberation Serif', serif;font-weight:normal;font-style:italic;font-size:16.5px;color:#249024;transform:scaleX(0.8839);-webkit-text-stroke:0.25px #249024;">C</span>
<span class="t" style="left:245.50px;top:131.00px;font-family:'Liberation Serif', serif;font-weight:normal;font-style:normal;font-size:17px;color:#1a1a1a;transform:scaleX(0.8511);-webkit-text-stroke:0.25px #1a1a1a;">::</span>
<span class="t" style="left:258.40px;top:131.00px;font-family:'Liberation Serif', serif;font-weight:normal;font-style:normal;font-size:17px;color:#1a1a1a;transform:scaleX(1.1445);-webkit-text-stroke:0.25px #1a1a1a;">number</span>
<span class="t" style="left:39.90px;top:158.00px;font-family:'Liberation Serif', serif;font-weight:normal;font-style:normal;font-size:17px;color:#1f1f8f;transform:scaleX(1.0916);-webkit-text-stroke:0.25px #1f1f8f;">display</span>
<span class="t" style="left:99.80px;top:159.30px;font-family:'Liberation Serif', serif;font-weight:bold;font-style:italic;font-size:16.5px;color:#0a820a;-webkit-text-stroke:0.4px #0a820a;">C</span>
<span class="t" style="left:117.00px;top:158.00px;font-family:'Liberation Serif', serif;font-weight:normal;font-style:normal;font-size:17px;color:#1a1a1a;transform:scaleX(0.7872);-webkit-text-stroke:0.25px #1a1a1a;">::</span>
<span class="t" style="left:129.40px;top:158.00px;font-family:'Liberation Serif', serif;font-weight:normal;font-style:normal;font-size:17px;color:#1a1a1a;transform:scaleX(1.1457);-webkit-text-stroke:0.25px #1a1a1a;">expr</span>
<span class="t" style="left:167.70px;top:159.00px;font-family:'Liberation Sans', sans-serif;font-weight:normal;font-style:normal;font-size:16px;color:#1f1f8f;transform:scaleX(0.9467);">as</span>
<span class="t" style="left:187.90px;top:156.00px;font-family:'Liberation Serif', serif;font-weight:normal;font-style:normal;font-size:8px;color:#1a1a1a;transform:scaleX(1.0500);">h</span>
<span class="t" style="left:205.40px;top:164.00px;font-family:'Liberation Serif', serif;font-weight:normal;font-style:normal;font-size:8.5px;color:#1a1a1a;transform:scaleX(1.1172);">192</span>
<span class="t" style="left:205.40px;top:176.00px;font-family:'Liberation Serif', serif;font-weight:normal;font-style:normal;font-size:8.5px;color:#1a1a1a;transform:scaleX(1.1172);">192</span>
<span class="t" style="left:205.40px;top:189.00px;font-family:'Liberation Serif', serif;font-weight:normal;font-style:normal;font-size:8.5px;color:#1a1a1a;transform:scaleX(1.1172);">192</span>
<span class="t" style="left:223.80px;top:156.50px;font-family:'Liberation Serif', serif;font-weight:normal;font-style:normal;font-size:17px;color:#1a1a1a;transform:scaleX(0.7442);-webkit-text-stroke:0.25px #1a1a1a;">,</span>
<span class="t" style="left:232.60px;top:158.50px;font-family:'Liberation Serif', serif;font-weight:normal;font-style:normal;font-size:17px;color:#1a1a1a;transform:scaleX(0.9647);-webkit-text-stroke:0.25px #1a1a1a;">2</span>
<span class="t" style="left:265.40px;top:158.30px;font-family:'Liberation Serif', serif;font-weight:normal;font-style:italic;font-size:16.5px;color:#249024;transform:scaleX(0.9464);-webkit-text-stroke:0.25px #249024;">C</span>
<span class="t" style="left:280.70px;top:158.50px;font-family:'Liberation Serif', serif;font-weight:normal;font-style:normal;font-size:17px;color:#1a1a1a;transform:scaleX(0.8830);-webkit-text-stroke:0.25px #1a1a1a;">::</span>
<span class="t" style="left:293.60px;top:158.50px;font-family:'Liberation Serif', serif;font-weight:normal;font-style:normal;font-size:17px;color:#1a1a1a;transform:scaleX(1.1098);-webkit-text-stroke:0.25px #1a1a1a;">number</span>
<span class="t" style="left:40.60px;top:203.00px;font-family:'Liberation Serif', serif;font-weight:normal;font-style:normal;font-size:17px;color:#1f1f8f;transform:scaleX(1.1101);-webkit-text-stroke:0.25px #1f1f8f;">use</span>
<span class="t" style="left:82.90px;top:203.00px;font-family:'Liberation Serif', serif;font-weight:normal;font-style:normal;font-size:17px;color:#1a1a1a;transform:scaleX(0.7128);-webkit-text-stroke:0.25px #1a1a1a;">::</span>
<span class="t" style="left:106.50px;top:203.00px;font-family:'Liberation Serif', serif;font-weight:normal;font-style:normal;font-size:17px;color:#1f1f8f;transform:scaleX(1.1408);-webkit-text-stroke:0.25px #1f1f8f;">as</span>
<span class="t" style="left:127.70px;top:203.00px;font-family:'Liberation Serif', serif;font-weight:normal;font-style:normal;font-size:17px;color:#1f1f8f;transform:scaleX(1.2060);-webkit-text-stroke:0.25px #1f1f8f;">adapter</span>
<span class="t" style="left:193.00px;top:203.00px;font-family:'Liberation Serif', serif;font-weight:normal;font-style:normal;font-size:17px;color:#1f1f8f;transform:scaleX(1.0960);-webkit-text-stroke:0.25px #1f1f8f;">for</span>
<span class="t" style="left:230.50px;top:203.00px;font-family:'Liberation Serif', serif;font-weight:normal;font-style:normal;font-size:17px;color:#1a1a1a;transform:scaleX(0.8404);-webkit-text-stroke:0.25px #1a1a1a;">::</span>
<span class="t" style="left:39.10px;top:227.00px;font-family:'Liberation Serif', serif;font-weight:normal;font-style:normal;font-size:17px;color:#1f1f8f;transform:scaleX(1.1568);-webkit-text-stroke:0.25px #1f1f8f;">declare</span>
<span class="t" style="left:101.21px;top:227.00px;font-family:'Liberation Serif', serif;font-weight:bold;font-style:italic;font-size:17px;color:#0a820a;transform:scaleX(1.0510);-webkit-text-stroke:0.4px #0a820a;">Expr</span>
<span class="t" style="left:143.50px;top:227.00px;font-family:'Liberation Serif', serif;font-weight:normal;font-style:normal;font-size:17px;color:#1a1a1a;transform:scaleX(1.1503);-webkit-text-stroke:0.25px #1a1a1a;">evaluates</span>
<span class="t" style="left:221.80px;top:227.00px;font-family:'Liberation Serif', serif;font-weight:normal;font-style:normal;font-size:17px;color:#1a1a1a;transform:scaleX(1.0909);-webkit-text-stroke:0.25px #1a1a1a;">to</span>
<span class="t" style="left:241.40px;top:227.00px;font-family:'Liberation Serif', serif;font-weight:bold;font-style:italic;font-size:17px;color:#0a820a;transform:scaleX(1.1310);-webkit-text-stroke:0.4px #0a820a;">Value</span>
<span class="t" style="left:291.90px;top:227.00px;font-family:'Liberation Serif', serif;font-weight:normal;font-style:normal;font-size:17px;color:#1a1a1a;transform:scaleX(0.8298);-webkit-text-stroke:0.25px #1a1a1a;">::</span>
<span class="t" style="left:305.00px;top:227.00px;font-family:'Liberation Serif', serif;font-weight:normal;font-style:normal;font-size:17px;color:#1a1a1a;transform:scaleX(1.1424);-webkit-text-stroke:0.25px #1a1a1a;">pred</span>
<span class="t" style="left:344.00px;top:227.00px;font-family:'Liberation Serif', serif;font-weight:normal;font-style:normal;font-size:17px;color:#1f1f8f;transform:scaleX(1.1253);-webkit-text-stroke:0.25px #1f1f8f;">where</span>
<span class="t" style="left:403.82px;top:227.00px;font-family:'Liberation Serif', serif;font-weight:normal;font-style:italic;font-size:17px;color:#249024;transform:scaleX(1.0811);-webkit-text-stroke:0.25px #249024;">Expr</span>
<span class="t" style="left:443.60px;top:227.00px;font-family:'Liberation Serif', serif;font-weight:normal;font-style:normal;font-size:17px;color:#1a1a1a;transform:scaleX(0.8830);-webkit-text-stroke:0.25px #1a1a1a;">::</span>
<span class="t" style="left:456.90px;top:227.00px;font-family:'Liberation Serif', serif;font-weight:normal;font-style:normal;font-size:17px;color:#1a1a1a;transform:scaleX(1.1623);-webkit-text-stroke:0.25px #1a1a1a;">expr</span>
<span class="t" style="left:495.70px;top:225.50px;font-family:'Liberation Serif', serif;font-weight:normal;font-style:normal;font-size:17px;color:#1a1a1a;transform:scaleX(0.5814);-webkit-text-stroke:0.25px #1a1a1a;">,</span>
<span class="t" style="left:503.80px;top:227.00px;font-family:'Liberation Serif', serif;font-weight:normal;font-style:italic;font-size:17px;color:#249024;transform:scaleX(1.0926);-webkit-text-stroke:0.25px #249024;">Value</span>
<span class="t" style="left:550.00px;top:227.00px;font-family:'Liberation Serif', serif;font-weight:normal;font-style:normal;font-size:17px;color:#1a1a1a;transform:scaleX(0.9255);-webkit-text-stroke:0.25px #1a1a1a;">::</span>
<span class="t" style="left:563.20px;top:227.00px;font-family:'Liberation Serif', serif;font-weight:normal;font-style:normal;font-size:17px;color:#1a1a1a;transform:scaleX(1.1291);-webkit-text-stroke:0.25px #1a1a1a;">number</span>
<span class="t" style="left:39.10px;top:249.00px;font-family:'Liberation Serif', serif;font-weight:normal;font-style:normal;font-size:17px;color:#1f1f8f;transform:scaleX(1.0876);-webkit-text-stroke:0.25px #1f1f8f;">display</span>
<span class="t" style="left:98.31px;top:249.00px;font-family:'Liberation Serif', serif;font-weight:bold;font-style:italic;font-size:17px;color:#0a820a;transform:scaleX(1.0708);-webkit-text-stroke:0.4px #0a820a;">Expr</span>
<span class="t" style="left:140.60px;top:249.00px;font-family:'Liberation Serif', serif;font-weight:normal;font-style:normal;font-size:17px;color:#1a1a1a;transform:scaleX(1.1614);-webkit-text-stroke:0.25px #1a1a1a;">evaluates</span>
<span class="t" style="left:219.10px;top:249.00px;font-family:'Liberation Serif', serif;font-weight:normal;font-style:normal;font-size:17px;color:#1a1a1a;transform:scaleX(1.0455);-webkit-text-stroke:0.25px #1a1a1a;">to</span>
<span class="t" style="left:238.50px;top:249.00px;font-family:'Liberation Serif', serif;font-weight:bold;font-style:italic;font-size:17px;color:#0a820a;transform:scaleX(1.1360);-webkit-text-stroke:0.4px #0a820a;">Value</span>
<span class="t" style="left:289.00px;top:249.00px;font-family:'Liberation Serif', serif;font-weight:normal;font-style:normal;font-size:17px;color:#1a1a1a;transform:scaleX(0.8511);-webkit-text-stroke:0.25px #1a1a1a;">::</span>
<span class="t" style="left:301.90px;top:249.00px;font-family:'Liberation Serif', serif;font-weight:normal;font-style:normal;font-size:17px;color:#1a1a1a;transform:scaleX(1.1722);-webkit-text-stroke:0.25px #1a1a1a;">pred</span>
<span class="t" style="left:341.70px;top:250.00px;font-family:'Liberation Sans', sans-serif;font-weight:normal;font-style:normal;font-size:16px;color:#1f1f8f;transform:scaleX(0.9231);">as</span>
<span class="t" style="left:361.60px;top:250.00px;font-family:'Liberation Serif', serif;font-weight:normal;font-style:normal;font-size:8px;color:#1a1a1a;transform:scaleX(1.1000);">h</span>
<span class="t" style="left:395.31px;top:249.00px;font-family:'Liberation Serif', serif;font-weight:normal;font-style:italic;font-size:17px;color:#249024;transform:scaleX(1.0691);-webkit-text-stroke:0.25px #249024;">Expr</span>
<span class="t" style="left:435.20px;top:249.00px;font-family:'Liberation Serif', serif;font-weight:normal;font-style:normal;font-size:17px;color:#1a1a1a;transform:scaleX(0.8936);-webkit-text-stroke:0.25px #1a1a1a;">::</span>
<span class="t" style="left:448.50px;top:249.00px;font-family:'Liberation Serif', serif;font-weight:normal;font-style:normal;font-size:17px;color:#1a1a1a;transform:scaleX(1.1523);-webkit-text-stroke:0.25px #1a1a1a;">expr</span>
<span class="t" style="left:513.00px;top:249.00px;font-family:'Liberation Serif', serif;font-weight:normal;font-style:normal;font-size:17px;color:#1a1a1a;transform:scaleX(0.8986);-webkit-text-stroke:0.25px #1a1a1a;">"</span>
<span class="t" style="left:522.90px;top:249.00px;font-family:'Liberation Serif', serif;font-weight:normal;font-style:normal;font-size:17px;color:#e8288a;transform:scaleX(1.1487);-webkit-text-stroke:0.25px #e8288a;">evaluates to</span>
<span class="t" style="left:620.50px;top:249.00px;font-family:'Liberation Serif', serif;font-weight:normal;font-style:normal;font-size:17px;color:#1a1a1a;transform:scaleX(0.8116);-webkit-text-stroke:0.25px #1a1a1a;">"</span>
<span class="t" style="left:656.20px;top:249.00px;font-family:'Liberation Serif', serif;font-weight:normal;font-style:italic;font-size:17px;color:#249024;transform:scaleX(1.0873);-webkit-text-stroke:0.25px #249024;">Value</span>
<span class="t" style="left:701.80px;top:249.00px;font-family:'Liberation Serif', serif;font-weight:normal;font-style:normal;font-size:17px;color:#1a1a1a;transform:scaleX(0.9468);-webkit-text-stroke:0.25px #1a1a1a;">::</span>
<span class="t" style="left:715.10px;top:249.00px;font-family:'Liberation Serif', serif;font-weight:normal;font-style:normal;font-size:17px;color:#1a1a1a;transform:scaleX(1.1368);-webkit-text-stroke:0.25px #1a1a1a;">number</span>
<span class="t" style="left:63.80px;top:281.40px;font-family:'Liberation Serif', serif;font-weight:bold;font-style:italic;font-size:16.5px;color:#0a820a;transform:scaleX(1.0089);-webkit-text-stroke:0.4px #0a820a;">C</span>
<span class="t" style="left:81.00px;top:281.00px;font-family:'Liberation Serif', serif;font-weight:normal;font-style:normal;font-size:17px;color:#1a1a1a;transform:scaleX(0.7766);-webkit-text-stroke:0.25px #1a1a1a;">::</span>
<span class="t" style="left:93.30px;top:281.00px;font-family:'Liberation Serif', serif;font-weight:normal;font-style:normal;font-size:17px;color:#1a1a1a;transform:scaleX(1.1126);-webkit-text-stroke:0.25px #1a1a1a;">expr</span>
<span class="t" style="left:131.70px;top:281.00px;font-family:'Liberation Serif', serif;font-weight:normal;font-style:normal;font-size:17px;color:#e8288a;transform:scaleX(1.1038);-webkit-text-stroke:0.25px #e8288a;">should</span>
<span class="t" style="left:187.60px;top:281.00px;font-family:'Liberation Serif', serif;font-weight:normal;font-style:normal;font-size:17px;color:#e8288a;transform:scaleX(1.1590);-webkit-text-stroke:0.25px #e8288a;">evaluate</span>
<span class="t" style="left:259.00px;top:281.00px;font-family:'Liberation Serif', serif;font-weight:normal;font-style:normal;font-size:17px;color:#e8288a;transform:scaleX(1.0682);-webkit-text-stroke:0.25px #e8288a;">to</span>
<span class="t" style="left:278.00px;top:281.00px;font-family:'Liberation Serif', serif;font-weight:normal;font-style:normal;font-size:17px;color:#e8288a;transform:scaleX(1.0531);-webkit-text-stroke:0.25px #e8288a;">C</span>
<span class="t" style="left:41.10px;top:315.30px;font-family:'Liberation Serif', serif;font-weight:bold;font-style:italic;font-size:16.5px;color:#0a820a;-webkit-text-stroke:0.4px #0a820a;">C</span>
<span class="t" style="left:57.70px;top:314.00px;font-family:'Liberation Serif', serif;font-weight:normal;font-style:normal;font-size:17px;color:#1a1a1a;transform:scaleX(1.1535);-webkit-text-stroke:0.25px #1a1a1a;">evaluates</span>
<span class="t" style="left:136.80px;top:314.00px;font-family:'Liberation Serif', serif;font-weight:normal;font-style:normal;font-size:17px;color:#1a1a1a;transform:scaleX(1.0303);-webkit-text-stroke:0.25px #1a1a1a;">to</span>
<span class="t" style="left:155.30px;top:314.00px;font-family:'Liberation Serif', serif;font-weight:normal;font-style:italic;font-size:16.5px;color:#249024;transform:scaleX(0.9911);-webkit-text-stroke:0.25px #249024;">C</span>
<span class="t" style="left:171.40px;top:314.00px;font-family:'Liberation Serif', serif;font-weight:normal;font-style:normal;font-size:17px;color:#1f1f8f;transform:scaleX(0.8269);-webkit-text-stroke:0.25px #1f1f8f;">:-</span>
<span class="t" style="left:183.70px;top:314.00px;font-family:'Liberation Serif', serif;font-weight:normal;font-style:normal;font-size:17px;color:#1a1a1a;transform:scaleX(1.1705);-webkit-text-stroke:0.25px #1a1a1a;">true</span>
</body></html>
